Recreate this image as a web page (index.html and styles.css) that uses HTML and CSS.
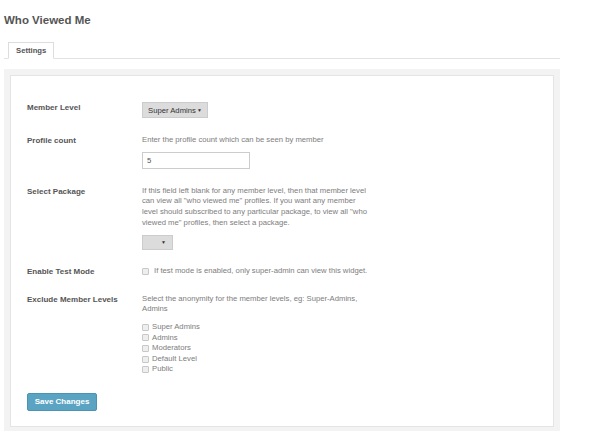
FILE: index.html
```html
<html>

<head>
    <meta charset="UTF-8" />
    <link rel="stylesheet" href="styles.css">
</head>

<body>
    <div id="site">
        <h2>Who Viewed Me</h2>
        <div class="tabs">
            <span class="tab">Settings</span>
        </div>
        <div class="panel">
            <form class="box">
                <div class="row">
                    <label class="label">Member Level</label>
                    <div class="field">
                        <span class="dropdown">Super Admins <span class="arrow">&#9660;</span></span>
                    </div>
                </div>
                <div class="row">
                    <label class="label">Profile count</label>
                    <div class="field">
                        <p class="desc">Enter the profile count which can be seen by member</p>
                        <input type="text" class="txt" value="5">
                    </div>
                </div>
                <div class="row">
                    <label class="label">Select Package</label>
                    <div class="field">
                        <p class="desc">If this field left blank for any member level, then that member level can view all "who viewed me" profiles. If you want any member level should subscribed to any particular package, to view all "who viewed me" profiles, then select a package.</p>
                        <span class="dropdown empty"><span class="arrow">&#9660;</span></span>
                    </div>
                </div>
                <div class="row">
                    <label class="label">Enable Test Mode</label>
                    <div class="field">
                        <label class="check first"><input type="checkbox"> If test mode is enabled, only super-admin can view this widget.</label>
                    </div>
                </div>
                <div class="row">
                    <label class="label">Exclude Member Levels</label>
                    <div class="field">
                        <p class="desc">Select the anonymity for the member levels, eg: Super-Admins, Admins</p>
                        <div class="checks">
                            <label class="check"><input type="checkbox"> Super Admins</label>
                            <label class="check"><input type="checkbox"> Admins</label>
                            <label class="check"><input type="checkbox"> Moderators</label>
                            <label class="check"><input type="checkbox"> Default Level</label>
                            <label class="check"><input type="checkbox"> Public</label>
                        </div>
                    </div>
                </div>
                <div class="buttons">
                    <button type="button" class="save">Save Changes</button>
                </div>
            </form>
        </div>
    </div>
</body>

</html>
```

FILE: styles.css
```css
html,
body {
    margin: 0;
    padding: 0;
    background-color: #fff;
}

#site {
    font-family: 'Liberation Sans', Arial, sans-serif;
    width: 556px;
    padding-left: 4px;
}

h2 {
    margin: 0;
    padding-top: 13px;
    font-size: 11.5px;
    line-height: 14px;
    font-weight: bold;
    color: #555;
}

.tabs {
    display: flex;
    margin-top: 15px;
    border-bottom: 1px solid #e2e2e2;
}

.tab {
    margin-left: 4px;
    margin-bottom: -1px;
    padding: 0 7px;
    height: 15px;
    line-height: 16px;
    font-size: 7.7px;
    font-weight: bold;
    color: #555;
    background-color: #fff;
    border: 1px solid #ddd;
    border-bottom: 1px solid #fff;
}

.panel {
    margin-top: 10px;
    background-color: #f3f3f3;
    padding: 6px 6px 4px 6px;
}

.box {
    display: flex;
    flex-direction: column;
    gap: 16.5px;
    margin: 0;
    background-color: #fff;
    border: 1px solid #e4e4e4;
    padding: 26px 16px 15px 16px;
}

.row {
    display: flex;
}

.label {
    width: 115px;
    flex-shrink: 0;
    font-size: 8px;
    line-height: 11px;
    font-weight: bold;
    color: #555;
}

.field {
    width: 229px;
    font-size: 7.7px;
    color: #7d7d7d;
}

.desc {
    margin: 0;
    line-height: 10.7px;
}

.dropdown {
    display: inline-flex;
    align-items: center;
    justify-content: space-between;
    box-sizing: border-box;
    width: 66px;
    height: 16px;
    padding: 0 5px;
    background-color: #dcdcdc;
    border: 1px solid #ccc;
    color: #333;
    font-size: 7.7px;
}

.dropdown.empty {
    width: 31px;
    height: 15px;
    justify-content: flex-end;
    padding-right: 6px;
    margin-top: 6px;
}

.arrow {
    font-size: 5px;
}

.txt {
    display: block;
    box-sizing: border-box;
    margin-top: 7px;
    width: 108px;
    height: 17px;
    padding: 0 4px;
    font-family: 'Liberation Sans', Arial, sans-serif;
    font-size: 7.7px;
    color: #555;
    border: 1px solid #ccc;
    outline: none;
}

.checks {
    margin-top: 7px;
}

.check {
    display: flex;
    align-items: center;
    white-space: nowrap;
    line-height: 10.6px;
    color: #7d7d7d;
}

.check input {
    -webkit-appearance: none;
    appearance: none;
    box-sizing: border-box;
    width: 7px;
    height: 7px;
    margin: 0 3px 0 0;
    background-color: #eee;
    border: 1px solid #c8c8c8;
    border-radius: 1px;
}

.check.first input {
    margin-right: 5px;
}

.buttons {
    margin-top: 1.5px;
}

.save {
    height: 18px;
    width: 70px;
    padding: 0;
    font-family: 'Liberation Sans', Arial, sans-serif;
    font-size: 8px;
    font-weight: bold;
    color: #fff;
    background-color: #5ba3c2;
    border: 1px solid #4c93b3;
    border-radius: 2px;
}
```
